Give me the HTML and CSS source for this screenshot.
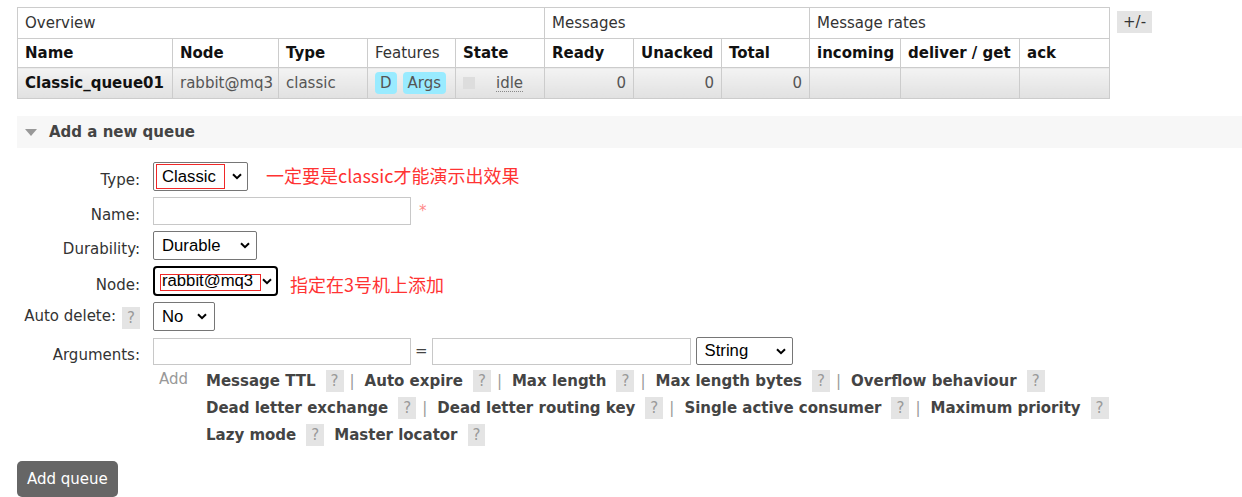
FILE: index.html
```html
<!DOCTYPE html>
<html lang="en">
<head>
<meta charset="utf-8">
<title>Queues</title>
<link rel="stylesheet" href="styles.css">
</head>
<body>
<div class="page">
  <div class="top">
    <table class="list">
      <colgroup>
        <col class="c-name"><col class="c-node"><col class="c-type"><col class="c-feat"><col class="c-state">
        <col class="c-ready"><col class="c-unack"><col class="c-total">
        <col class="c-in"><col class="c-deliver"><col class="c-ack">
      </colgroup>
      <thead>
        <tr class="group">
          <th colspan="5">Overview</th>
          <th colspan="3">Messages</th>
          <th colspan="3">Message rates</th>
        </tr>
        <tr class="heads">
          <th>Name</th><th>Node</th><th>Type</th><th class="plain">Features</th><th>State</th>
          <th>Ready</th><th>Unacked</th><th>Total</th>
          <th>incoming</th><th>deliver / get</th><th>ack</th>
        </tr>
      </thead>
      <tbody>
        <tr>
          <td class="qname">Classic_queue01</td>
          <td>rabbit@mq3</td>
          <td>classic</td>
          <td><span class="badge">D</span><span class="badge">Args</span></td>
          <td><span class="state-box"></span><abbr class="state">idle</abbr></td>
          <td class="num">0</td>
          <td class="num">0</td>
          <td class="num">0</td>
          <td></td><td></td><td></td>
        </tr>
      </tbody>
    </table>
    <span class="toggle">+/-</span>
  </div>

  <div class="section-head"><span class="tri"></span>Add a new queue</div>

  <div class="form">
    <div class="row">
      <label class="label">Type:</label>
      <div class="field">
        <div class="select sel-type"><span>Classic</span><svg class="chev" width="10" height="7" viewBox="0 0 10 7"><path d="M1 1.2 L5 5.2 L9 1.2" fill="none" stroke="#000" stroke-width="2"/></svg><span class="mark mark-type"></span></div>
        <span class="note note-type">一定要是classic才能演示出效果</span>
      </div>
    </div>
    <div class="row">
      <label class="label">Name:</label>
      <div class="field">
        <span class="input in-name"></span>
        <span class="req">*</span>
      </div>
    </div>
    <div class="row">
      <label class="label">Durability:</label>
      <div class="field">
        <div class="select sel-dur"><span>Durable</span><svg class="chev" width="10" height="7" viewBox="0 0 10 7"><path d="M1 1.2 L5 5.2 L9 1.2" fill="none" stroke="#000" stroke-width="2"/></svg></div>
      </div>
    </div>
    <div class="row">
      <label class="label">Node:</label>
      <div class="field">
        <div class="select sel-node"><span>rabbit@mq3</span><svg class="chev" width="10" height="7" viewBox="0 0 10 7"><path d="M1 1.2 L5 5.2 L9 1.2" fill="none" stroke="#000" stroke-width="2"/></svg><span class="mark mark-node"></span></div>
        <span class="note note-node">指定在3号机上添加</span>
      </div>
    </div>
    <div class="row">
      <label class="label label-help">Auto delete:<span class="help help-label">?</span></label>
      <div class="field">
        <div class="select sel-no"><span>No</span><svg class="chev" width="10" height="7" viewBox="0 0 10 7"><path d="M1 1.2 L5 5.2 L9 1.2" fill="none" stroke="#000" stroke-width="2"/></svg></div>
      </div>
    </div>
    <div class="row row-args">
      <label class="label label-args">Arguments:</label>
      <div class="field-col">
        <div class="args">
          <span class="input in-key"></span>
          <span class="eq">=</span>
          <span class="input in-val"></span>
          <div class="select sel-str"><span>String</span><svg class="chev" width="10" height="7" viewBox="0 0 10 7"><path d="M1 1.2 L5 5.2 L9 1.2" fill="none" stroke="#000" stroke-width="2"/></svg></div>
        </div>
        <div class="adders">
          <span class="add">Add</span>
          <div class="opts">
            <div class="opt-line">
              <span class="opt">Message TTL</span><span class="help">?</span><span class="sep">|</span>
              <span class="opt">Auto expire</span><span class="help">?</span><span class="sep">|</span>
              <span class="opt">Max length</span><span class="help">?</span><span class="sep">|</span>
              <span class="opt">Max length bytes</span><span class="help">?</span><span class="sep">|</span>
              <span class="opt">Overflow behaviour</span><span class="help">?</span>
            </div>
            <div class="opt-line">
              <span class="opt">Dead letter exchange</span><span class="help">?</span><span class="sep">|</span>
              <span class="opt">Dead letter routing key</span><span class="help">?</span><span class="sep">|</span>
              <span class="opt">Single active consumer</span><span class="help">?</span><span class="sep">|</span>
              <span class="opt">Maximum priority</span><span class="help">?</span>
            </div>
            <div class="opt-line">
              <span class="opt">Lazy mode</span><span class="help">?</span>
              <span class="opt">Master locator</span><span class="help">?</span>
            </div>
          </div>
        </div>
      </div>
    </div>
  </div>

  <button class="btn" type="button">Add queue</button>
</div>
</body>
</html>
```

FILE: styles.css
```css
html, body {
  margin: 0;
  padding: 0;
  background: #fff;
}

body {
  font-family: "DejaVu Sans", Verdana, sans-serif;
  font-size: 15px;
  line-height: 18px;
  color: #333;
}

.page {
  padding: 7px 0 0 17px;
}

/* ---------- queue table ---------- */
.top {
  display: flex;
  align-items: flex-start;
}

.list {
  border-collapse: collapse;
  table-layout: fixed;
  width: 1092px;
}

.c-name { width: 155px; }
.c-node { width: 106px; }
.c-type { width: 89px; }
.c-feat { width: 88px; }
.c-state { width: 89px; }
.c-ready { width: 89px; }
.c-unack { width: 88px; }
.c-total { width: 88px; }
.c-in { width: 91px; }
.c-deliver { width: 119px; }
.c-ack { width: 90px; }

.list th,
.list td {
  border: 1px solid #ccc;
  padding: 0 7px;
  text-align: left;
  white-space: nowrap;
  overflow: hidden;
  vertical-align: middle;
}

.group th {
  height: 30px;
  font-weight: normal;
  color: #333;
}

.heads th {
  height: 28px;
  font-weight: bold;
  color: #111;
}

.heads th.plain {
  font-weight: normal;
  color: #333;
}

.list tbody td {
  height: 30px;
  background: linear-gradient(#f3f3f3, #e1e1e1);
  color: #555;
}

.list tbody td.qname {
  font-weight: bold;
  color: #111;
}

.list td.num {
  text-align: right;
}

.badge {
  display: inline-block;
  padding: 2px 5px;
  line-height: 18px;
  background: #99ebff;
  border-radius: 4px;
  color: #555;
  margin-right: 6px;
}

.state-box {
  display: inline-block;
  width: 12px;
  height: 12px;
  background: #ddd;
  vertical-align: -1px;
  margin-right: 21px;
}

.state {
  text-decoration: none;
  border-bottom: 1px dotted #888;
  line-height: 16px;
  display: inline-block;
}

.toggle {
  margin: 4px 0 0 7px;
  background: #e4e4e4;
  padding: 2px 6px;
  line-height: 18px;
  color: #333;
}

/* ---------- section heading ---------- */
.section-head {
  margin-top: 17px;
  height: 32px;
  display: flex;
  align-items: center;
  background: #f7f7f7;
  font-weight: bold;
  color: #444;
}

.tri {
  width: 0;
  height: 0;
  border-left: 6px solid transparent;
  border-right: 6px solid transparent;
  border-top: 7px solid #999;
  margin: 1px 12px 0 8px;
}

/* ---------- form ---------- */
.form {
  margin-top: 14px;
  display: flex;
  flex-direction: column;
  gap: 6px;
}

.row {
  display: flex;
  align-items: center;
}

.label {
  width: 123px;
  flex: none;
  text-align: right;
  padding-top: 7px;
  margin-right: 13px;
  color: #333;
}

.label-help {
  padding-top: 3px;
}

.row-args {
  align-items: flex-start;
}

.label-args {
  padding-top: 9px;
}

.field {
  display: flex;
  align-items: center;
}

.field-col {
  display: flex;
  flex-direction: column;
}

.select {
  position: relative;
  box-sizing: border-box;
  display: inline-flex;
  align-items: center;
  justify-content: space-between;
  height: 29px;
  border: 1px solid #767676;
  border-radius: 2px;
  padding: 0 6px 0 8px;
  font-family: "Liberation Sans", Arial, sans-serif;
  font-size: 16.7px;
  color: #000;
  background: #fff;
}

.chev {
  flex: none;
  display: block;
}

.sel-type { width: 95px; padding-right: 5px; }
.sel-dur { width: 104px; }
.sel-no { width: 62px; padding-right: 7px; }
.sel-str { width: 97px; height: 28px; margin-left: 5px; }

.sel-node {
  width: 125px;
  height: 30px;
  border: 2px solid #000;
  border-radius: 4px;
  padding: 0 4px 0 7px;
}

.mark {
  position: absolute;
  box-sizing: border-box;
  border: 1px solid #f02828;
}

.mark-type {
  left: 2px;
  top: 1px;
  width: 69px;
  height: 25px;
}

.mark-node {
  left: 5px;
  top: 6px;
  width: 101px;
  height: 17px;
}

.note {
  font-family: "Noto Sans CJK SC", sans-serif;
  font-size: 18px;
  line-height: 22px;
  color: #f33;
}

.note-type {
  margin-left: 18px;
  margin-bottom: 3px;
}

.note-node {
  margin-left: 12px;
  margin-top: 6px;
}

.input {
  display: inline-block;
  box-sizing: border-box;
  height: 28px;
  border: 1px solid #c8c8c8;
  background: #fff;
}

.in-name { width: 258px; }

.req {
  margin-left: 8px;
  color: #f88;
  align-self: flex-start;
  padding-top: 5px;
}

.args {
  display: flex;
  align-items: center;
}

.in-key { width: 258px; height: 27px; }
.in-val { width: 259px; height: 27px; }

.eq {
  margin: 0 4px;
  color: #444;
}

.help {
  display: inline-block;
  background: #e4e4e4;
  color: #999;
  padding: 0 5px;
  line-height: 22px;
  font-weight: normal;
}

.help-label {
  margin-left: 6px;
  margin-right: 0;
  vertical-align: top;
}

.adders {
  display: flex;
  align-items: flex-start;
  margin-top: 2px;
}

.add {
  margin-left: 6px;
  width: 47px;
  flex: none;
  padding-top: 3px;
  color: #999;
}

.opts {
  display: flex;
  flex-direction: column;
}

.opt-line {
  display: flex;
  align-items: center;
  height: 27px;
  white-space: nowrap;
}

.opt {
  font-weight: bold;
  color: #444;
}

.opt-line .help {
  margin-left: 10px;
}

.sep {
  color: #999;
  margin: 0 10px 0 6px;
}

.opt-line .help + .opt {
  margin-left: 10px;
}

/* ---------- button ---------- */
.btn {
  margin-top: 13px;
  display: block;
  border: none;
  border-radius: 5px;
  background: #666;
  color: #fff;
  font-family: "DejaVu Sans", Verdana, sans-serif;
  font-size: 15px;
  line-height: 20px;
  padding: 8px 10px;
}
```
